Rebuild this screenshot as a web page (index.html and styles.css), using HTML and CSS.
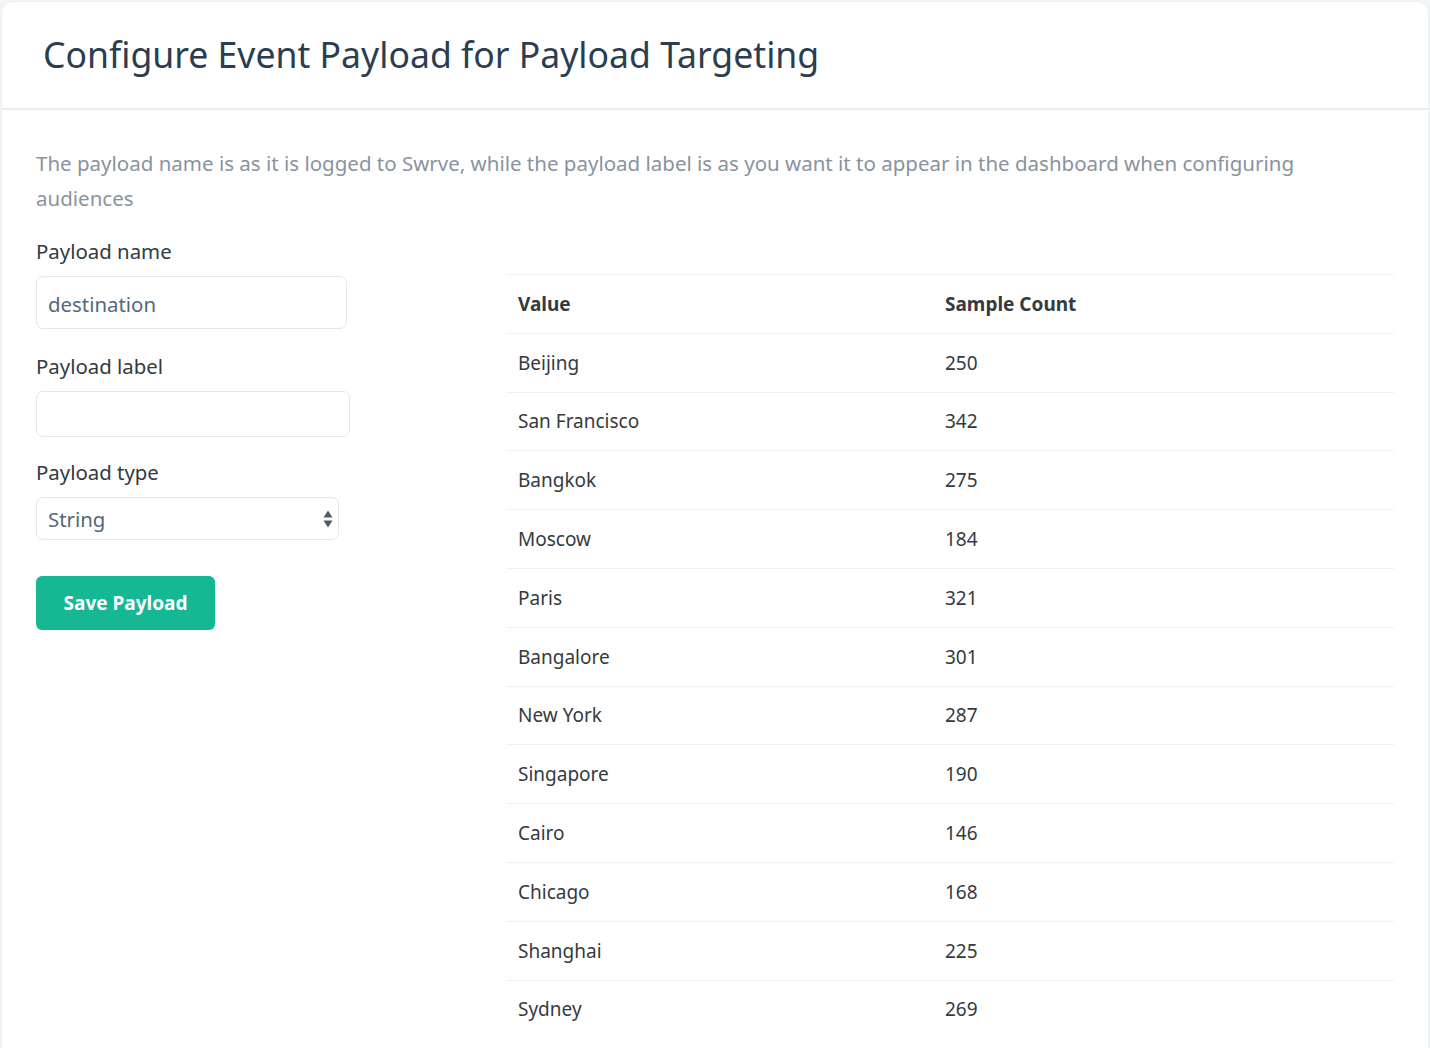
FILE: index.html
```html
<!DOCTYPE html>
<html lang="en">
<head>
<meta charset="utf-8">
<title>Configure Event Payload</title>
<link rel="stylesheet" href="styles.css">
</head>
<body>
<div class="card">
  <header class="card-header">
    <h1 class="title">Configure Event Payload for Payload Targeting</h1>
  </header>
  <div class="card-body">
    <p class="desc">The payload name is as it is logged to Swrve, while the payload label is as you want it to appear in the dashboard when configuring audiences</p>
    <div class="layout">
      <form class="form">
        <label class="label">Payload name</label>
        <div class="input input-name">destination</div>
        <label class="label">Payload label</label>
        <div class="input input-label"></div>
        <label class="label">Payload type</label>
        <div class="select">
          <span>String</span>
          <svg class="arrows" width="10" height="20" viewBox="0 0 10 20"><path d="M5 1.5 L9.5 8.5 H0.5 Z" fill="#4b5a69"/><path d="M5 18.5 L9.5 11.5 H0.5 Z" fill="#4b5a69"/></svg>
        </div>
        <button type="button" class="btn">Save Payload</button>
      </form>
      <table class="table">
        <thead>
          <tr><th class="col-value">Value</th><th>Sample Count</th></tr>
        </thead>
        <tbody>
          <tr><td>Beijing</td><td>250</td></tr>
          <tr><td>San Francisco</td><td>342</td></tr>
          <tr><td>Bangkok</td><td>275</td></tr>
          <tr><td>Moscow</td><td>184</td></tr>
          <tr><td>Paris</td><td>321</td></tr>
          <tr><td>Bangalore</td><td>301</td></tr>
          <tr><td>New York</td><td>287</td></tr>
          <tr><td>Singapore</td><td>190</td></tr>
          <tr><td>Cairo</td><td>146</td></tr>
          <tr><td>Chicago</td><td>168</td></tr>
          <tr><td>Shanghai</td><td>225</td></tr>
          <tr><td>Sydney</td><td>269</td></tr>
        </tbody>
      </table>
    </div>
  </div>
</div>
</body>
</html>
```
FILE: styles.css
```css
html, body {
  margin: 0;
  padding: 0;
  background: #f3f5f7;
  font-family: "Noto Sans", "Open Sans", sans-serif;
}
body {
  padding: 1px 1px 0 1px;
  height: 1048px;
  overflow: hidden;
  box-sizing: border-box;
}
.card {
  background: #fff;
  border: 1px solid #eceff2;
  border-radius: 12px 12px 0 0;
  min-height: 1100px;
}
.card-header {
  height: 106px;
  border-bottom: 2px solid #eaeef2;
  display: flex;
  align-items: center;
  padding: 0 0 0 41px;
}
.title {
  margin: 0;
  font-size: 35.6px;
  font-weight: 400;
  color: #2b3d50;
  position: relative;
  top: -1px;
}
.card-body {
  padding: 36px 34px 0 34px;
}
.desc {
  margin: 0;
  font-size: 20.5px;
  line-height: 35px;
  color: #8893a0;
  max-width: 1320px;
}
.layout {
  display: grid;
  grid-template-columns: 470px 1fr;
  margin-top: 20px;
}
.form {
  display: flex;
  flex-direction: column;
  align-items: flex-start;
}
.label {
  font-size: 20.4px;
  line-height: 30px;
  color: #333a40;
  margin-bottom: 10px;
}
.input, .select {
  box-sizing: border-box;
  border: 1.5px solid #e4e8ec;
  border-radius: 7px;
  background: #fff;
  font-size: 20.4px;
  color: #55687a;
  padding: 0 11px;
  display: flex;
  align-items: center;
}
.input-name {
  width: 311px;
  height: 53px;
  margin-bottom: 22px;
  padding-top: 2px;
}
.input-label {
  width: 314px;
  height: 46px;
  margin-bottom: 20px;
}
.select {
  width: 303px;
  height: 43px;
  justify-content: space-between;
  padding-right: 5px;
  margin-bottom: 36px;
}
.arrows {
  display: block;
}
.btn {
  width: 179px;
  height: 54px;
  border: none;
  border-radius: 6px;
  background: #16b793;
  color: #fff;
  font-family: "Noto Sans", "Open Sans", sans-serif;
  font-size: 19px;
  font-weight: 700;
  cursor: pointer;
}
.table {
  border-collapse: collapse;
  width: 888px;
  margin-top: 38px;
  align-self: start;
  font-size: 19px;
  color: #353a3f;
}
.table th, .table td {
  text-align: left;
  padding: 0 12px;
  height: 57.8px;
  border-top: 1.5px solid #eef1f4;
}
.table th {
  font-weight: 700;
}
.col-value {
  width: 403px;
}
```
